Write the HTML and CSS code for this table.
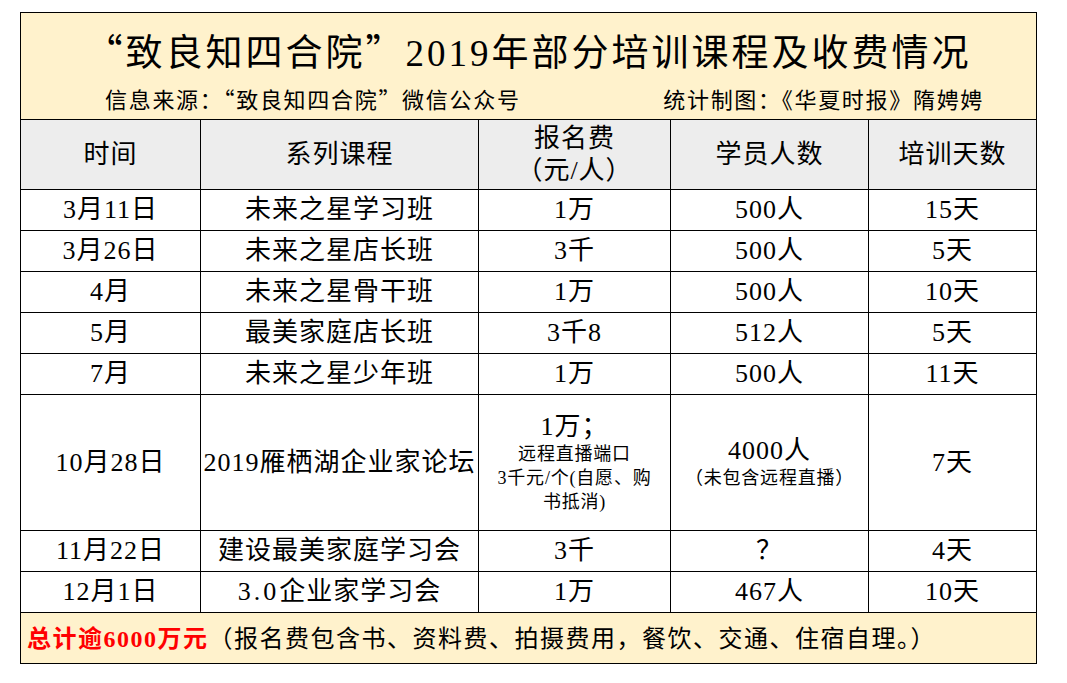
FILE: index.html
```html
<!DOCTYPE html>
<html lang="zh-CN">
<head>
<meta charset="utf-8">
<title>“致良知四合院”2019年部分培训课程及收费情况</title>
<link rel="stylesheet" href="styles.css">
</head>
<body>
<table class="sheet">
  <colgroup>
    <col class="c1"><col class="c2"><col class="c3"><col class="c4"><col class="c5">
  </colgroup>
  <tbody>
    <tr class="head-block">
      <td colspan="5">
        <div class="title"><span class="cjk">“致良知四合院”</span>2019年部分培训课程及收费情况</div>
        <div class="sub">
          <span class="cjk">信息来源：“致良知四合院”微信公众号</span>
          <span class="cjk">统计制图：《华夏时报》隋娉娉</span>
        </div>
      </td>
    </tr>
    <tr class="cols">
      <th>时间</th>
      <th>系列课程</th>
      <th class="two">报名费<br>（元/人）</th>
      <th>学员人数</th>
      <th>培训天数</th>
    </tr>
    <tr class="row"><td>3月11日</td><td>未来之星学习班</td><td>1万</td><td>500人</td><td>15天</td></tr>
    <tr class="row"><td>3月26日</td><td>未来之星店长班</td><td>3千</td><td>500人</td><td>5天</td></tr>
    <tr class="row"><td>4月</td><td>未来之星骨干班</td><td>1万</td><td>500人</td><td>10天</td></tr>
    <tr class="row"><td>5月</td><td>最美家庭店长班</td><td>3千8</td><td>512人</td><td>5天</td></tr>
    <tr class="row"><td>7月</td><td>未来之星少年班</td><td>1万</td><td>500人</td><td>11天</td></tr>
    <tr class="big">
      <td>10月28日</td>
      <td>2019雁栖湖企业家论坛</td>
      <td>
        <div class="fee-main">1万；</div>
        <div class="small">远程直播端口<br>3千元/个(自愿、购<br>书抵消)</div>
      </td>
      <td>
        <div class="people-main">4000人</div>
        <div class="small">（未包含远程直播）</div>
      </td>
      <td>7天</td>
    </tr>
    <tr class="row"><td>11月22日</td><td>建设最美家庭学习会</td><td>3千</td><td>？</td><td>4天</td></tr>
    <tr class="row"><td>12月1日</td><td><span class="spaced">3.0</span>企业家学习会</td><td>1万</td><td>467人</td><td>10天</td></tr>
    <tr class="foot">
      <td colspan="5"><span class="total">总计逾6000万元</span>（报名费包含书、资料费、拍摄费用，餐饮、交通、住宿自理。）</td>
    </tr>
  </tbody>
</table>
</body>
</html>
```
FILE: styles.css
```css
html, body {
  margin: 0;
  padding: 0;
  background: #ffffff;
}
body {
  padding: 12px 0 0 20px;
  font-family: "Liberation Serif", "Noto Sans CJK SC", serif;
  color: #000000;
}
.cjk {
  font-family: "Noto Sans CJK SC", sans-serif;
}
.sheet {
  border-collapse: collapse;
  table-layout: fixed;
  width: 1016px;
}
.c1 { width: 180px; }
.c2 { width: 278px; }
.c3 { width: 192px; }
.c4 { width: 198px; }
.c5 { width: 168px; }
.sheet td, .sheet th {
  border: 1px solid #000000;
  padding: 0;
  text-align: center;
  vertical-align: middle;
  font-size: 26px;
  font-weight: normal;
  line-height: 30px;
  letter-spacing: 1px;
  white-space: nowrap;
}
.head-block td {
  background: #fff2cc;
  height: 106px;
  vertical-align: top;
}
.title {
  font-size: 37px;
  line-height: 44px;
  margin-top: 15px;
  font-weight: 400;
  letter-spacing: 3px;
}
.sub {
  display: flex;
  justify-content: space-between;
  padding: 0 52px 0 84px;
  font-size: 22px;
  line-height: 28px;
  margin-top: 8px;
  letter-spacing: 1.7px;
}
.cols th {
  background: #ededed;
  height: 69px;
  font-size: 26px;
}
.cols th.two {
  line-height: 32px;
}
.row td {
  height: 40px;
}
.big td {
  height: 135px;
}
.fee-main, .people-main {
  font-size: 26px;
  line-height: 30px;
}
.small {
  font-size: 18px;
  line-height: 24px;
  letter-spacing: 0.8px;
}
.spaced {
  letter-spacing: 3px;
}
.foot td {
  background: #fff2cc;
  height: 50px;
  text-align: left;
  padding-left: 6px;
  font-size: 24px;
  letter-spacing: 1.5px;
  font-family: "Noto Sans CJK SC", sans-serif;
}
.total {
  color: #ff0000;
  font-weight: bold;
  font-family: "Liberation Serif", "Noto Sans CJK SC", serif;
}
```
